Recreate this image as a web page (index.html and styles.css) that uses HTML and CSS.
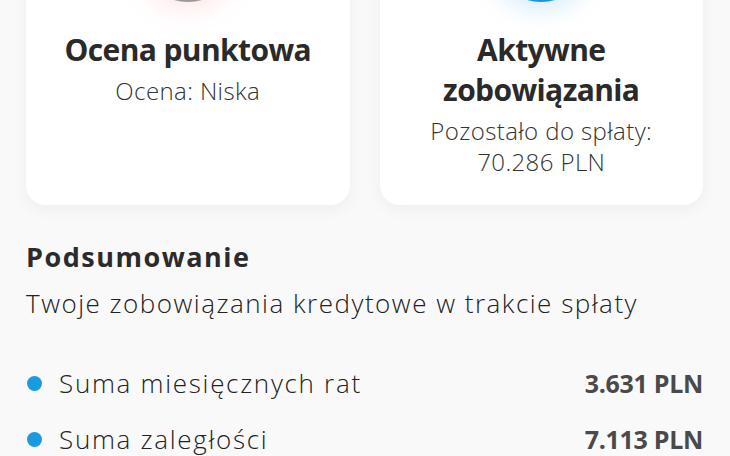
FILE: index.html
```html
<!DOCTYPE html>
<html lang="pl">
<head>
<meta charset="utf-8">
<link rel="stylesheet" href="styles.css">
</head>
<body>
<main class="page">
  <section class="cards">
    <article class="card">
      <div class="icon icon-score"></div>
      <h2 class="card-title">Ocena punktowa</h2>
      <p class="card-text">Ocena: Niska</p>
    </article>
    <article class="card">
      <div class="icon icon-active"></div>
      <h2 class="card-title">Aktywne<br>zobowiązania</h2>
      <p class="card-text">Pozostało do spłaty:<br>70.286 PLN</p>
    </article>
  </section>
  <section class="summary">
    <h3 class="summary-title">Podsumowanie</h3>
    <p class="summary-text">Twoje zobowiązania kredytowe w trakcie spłaty</p>
    <ul class="list">
      <li class="row"><span class="dot"></span><span class="label">Suma miesięcznych rat</span><span class="value">3.631 PLN</span></li>
      <li class="row"><span class="dot"></span><span class="label">Suma zaległości</span><span class="value">7.113 PLN</span></li>
    </ul>
  </section>
</main>
</body>
</html>
```
FILE: styles.css
```css
html, body {
  margin: 0;
  padding: 0;
  background: #f9f9f9;
  overflow: hidden;
}
body {
  font-family: "Open Sans", "Noto Sans", sans-serif;
  color: #2b2b2b;
}
.page {
  padding: 0 27px 0 26px;
}
.cards {
  display: grid;
  grid-template-columns: 1fr 1fr;
  gap: 30px;
  margin-top: -118px;
}
.card {
  background: #fff;
  border-radius: 20px;
  box-shadow: 0 4px 16px rgba(0, 0, 0, 0.05);
  padding: 20px 12px 28px;
  display: flex;
  flex-direction: column;
  align-items: center;
  text-align: center;
}
.icon {
  width: 100px;
  height: 100px;
  border-radius: 50%;
  margin-bottom: 28px;
}
.icon-score {
  background: #ececec;
  border-bottom: 2px solid #9a9a9a;
  box-sizing: border-box;
  box-shadow: 0 6px 26px rgba(255, 110, 110, 0.18);
}
.icon-active {
  background: #1c94de;
  box-shadow: 0 6px 26px rgba(40, 160, 230, 0.22);
}
.card-title {
  margin: 0;
  font-size: 30px;
  line-height: 40px;
  font-weight: 700;
  letter-spacing: -0.6px;
  color: #2a2a2a;
}
.card-text {
  margin: 5px 0 0;
  font-size: 24px;
  line-height: 31px;
  font-weight: 300;
  letter-spacing: 0.4px;
  color: #333;
}
.summary-title {
  margin: 35px 0 0;
  font-size: 27px;
  line-height: 34px;
  font-weight: 700;
  letter-spacing: 1.5px;
  color: #2b2b2b;
}
.summary-text {
  margin: 13px 0 0;
  font-size: 26px;
  line-height: 32px;
  font-weight: 300;
  letter-spacing: 1.5px;
  color: #222;
}
.list {
  list-style: none;
  margin: 36px 0 0;
  padding: 0;
}
.row {
  display: flex;
  align-items: center;
  height: 56px;
}
.dot {
  width: 15px;
  height: 15px;
  border-radius: 50%;
  background: #1a9be0;
  margin: 0 17px 0 1px;
  flex: none;
}
.label {
  flex: 1;
  font-size: 26px;
  font-weight: 300;
  letter-spacing: 1.7px;
  color: #222;
}
.value {
  font-size: 25px;
  font-weight: 700;
  letter-spacing: -0.3px;
  color: #4a4a4a;
}
```
